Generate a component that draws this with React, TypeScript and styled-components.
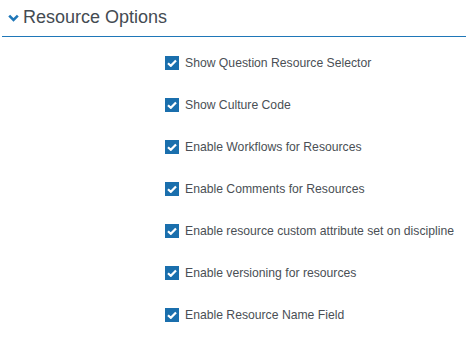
import React from 'react'
import styled, { createGlobalStyle } from 'styled-components'

const GlobalStyle = createGlobalStyle`
  html, body {
    margin: 0;
    padding: 0;
    background: #ffffff;
    font-family: "Liberation Sans", Arial, sans-serif;
  }
`

const Panel = styled.div`
  width: 466px;
  height: 340px;
  overflow: hidden;
`

const Header = styled.div`
  display: flex;
  align-items: center;
  gap: 4px;
  height: 37px;
  margin-left: 2px;
  padding-left: 6px;
  border-bottom: 1px solid #1f77b8;
  box-sizing: border-box;
  padding-bottom: 1px;
`

const Title = styled.div`
  font-size: 18px;
  color: #444b52;
`

const Options = styled.div`
  display: flex;
  flex-direction: column;
  padding-left: 165px;
  padding-top: 19px;
`

const OptionRow = styled.label`
  display: flex;
  align-items: center;
  gap: 6px;
  height: 14px;
  margin-bottom: 28px;
  font-size: 12.2px;
  color: #4a4f55;
  white-space: nowrap;
`

const Box = styled.span`
  display: inline-flex;
  align-items: center;
  justify-content: center;
  width: 14px;
  height: 14px;
  background: #1a6fad;
  flex-shrink: 0;
`

const Chevron = () => (
  <svg width="11" height="8" viewBox="0 0 11 8">
    <path d="M1.2 1.6 L5.5 5.9 L9.8 1.6" fill="none" stroke="#1f77b8" strokeWidth="2.6" />
  </svg>
)

const Check = () => (
  <svg width="10" height="8" viewBox="0 0 10 8">
    <path d="M1 4.2 L3.8 6.8 L9 1.4" fill="none" stroke="#ffffff" strokeWidth="2.2" />
  </svg>
)

const items = [
  'Show Question Resource Selector',
  'Show Culture Code',
  'Enable Workflows for Resources',
  'Enable Comments for Resources',
  'Enable resource custom attribute set on discipline',
  'Enable versioning for resources',
  'Enable Resource Name Field',
]

export default function App() {
  return (
    <Panel>
      <GlobalStyle />
      <Header>
        <Chevron />
        <Title>Resource Options</Title>
      </Header>
      <Options>
        {items.map((text) => (
          <OptionRow key={text}>
            <Box><Check /></Box>
            {text}
          </OptionRow>
        ))}
      </Options>
    </Panel>
  )
}
